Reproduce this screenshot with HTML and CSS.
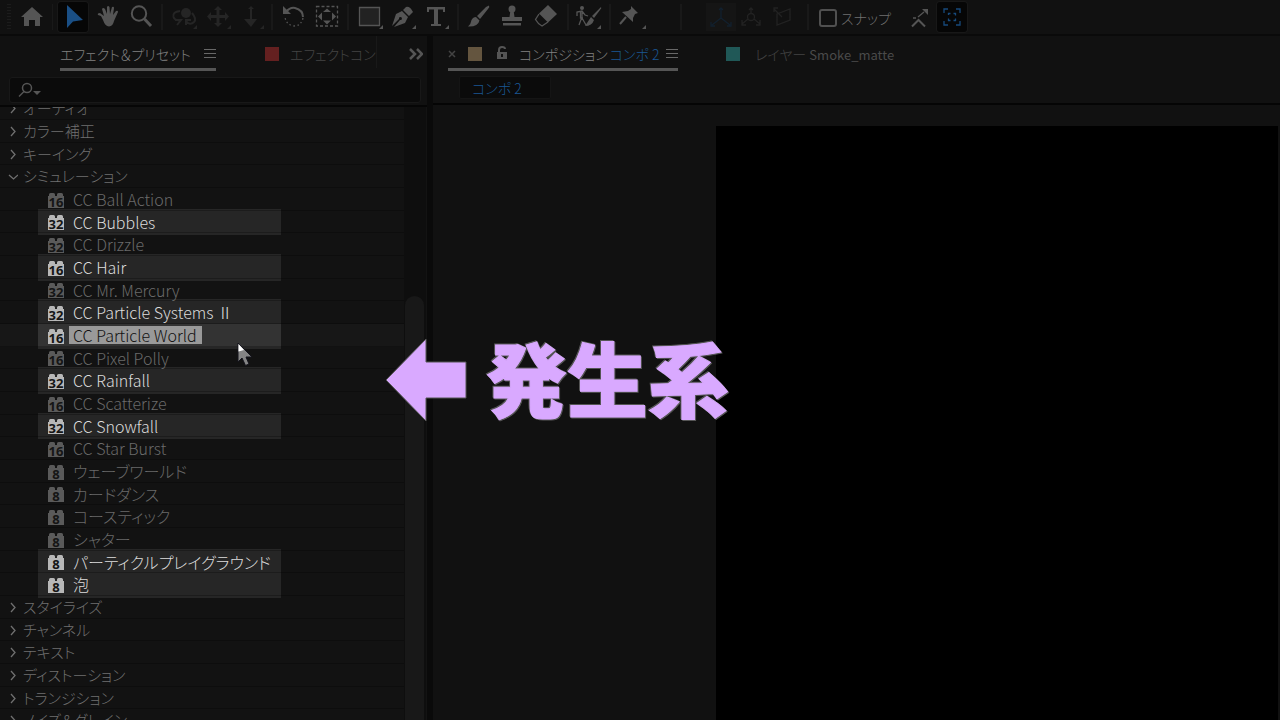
FILE: index.html
```html
<!DOCTYPE html>
<html lang="ja">
<head>
<meta charset="utf-8">
<title>エフェクト＆プリセット</title>
<link rel="stylesheet" href="styles.css">
</head>
<body>
<svg class="defs" aria-hidden="true">
  <symbol id="brick" viewBox="0 0 16 15"><path fill="currentColor" d="M0 15V3H1V1.500Q1 0 2.500 0H5.500Q7 0 7 1.500V3H9V1.500Q9 0 10.500 0H13.500Q15 0 15 1.500V3H16V15Z"/></symbol>
  <symbol id="closed" viewBox="0 0 10 12"><path d="M3 2L7 6.500L3 11" fill="none" stroke="currentColor" stroke-width="1.3"/></symbol>
  <symbol id="open" viewBox="0 0 10 12"><path d="M1 5L5.500 9L10 5" fill="none" stroke="currentColor" stroke-width="1.3"/></symbol>
  <symbol id="menu" viewBox="0 0 12 12"><path d="M0 1.5H12M0 5.5H12M0 9.5H12" stroke="currentColor"/></symbol>
</svg>

<header class="toolbar">
  <span class="grip"></span>
  <button class="tool home" aria-label="ホーム"><svg viewBox="15 0 34 34"><path d="M32 7L21 17H24V26H29V20H35V26H40V17H43Z"/></svg></button>
  <span class="sep"></span>
  <button class="tool active" aria-label="選択ツール"><svg viewBox="57 0 34 34"><path class="blue" d="M68 5V28L74 21.500L84 20Z"/></svg></button>
  <button class="tool" aria-label="手のひらツール"><svg viewBox="90 0 34 34"><path d="M103 20L101 16L98 15Q97 13 100 13L104 16L102 9Q103 7 105 9L107 14V7Q108 5 109.500 7L110 14L112 7Q114 6 114 8L113 15L116 11Q118 10 118 12L114 21Q113 26 109 26.500Q105 26 103 20Z"/></svg></button>
  <button class="tool" aria-label="ズームツール"><svg viewBox="124 0 34 34"><circle class="line" cx="139" cy="13.500" r="7.200"/><path class="line thick" d="M144.500 19L151 26"/></svg></button>
  <span class="sep"></span>
  <button class="tool faint" aria-label="周回ツール"><svg viewBox="166 0 34 34"><circle cx="186" cy="13" r="5"/><path class="line" d="M180 11Q172 12 173.500 17Q175 21 180 20M177 25L181 20L175 20M192 13Q197 19 194 22Q190 26 186 21M186 25V20H191"/><path d="M193 29H197V25Z"/></svg></button>
  <button class="tool faint" aria-label="パンツール"><svg viewBox="200 0 34 34"><path d="M218 6L222 10H219.500V15H225V12L229 16.500L225 21V18H219.500V23H222L218 27L214 23H216.500V18H211V21L207 16.500L211 12V15H216.500V10H214Z"/><path d="M227 29H231V25Z"/></svg></button>
  <button class="tool faint" aria-label="ドリーツール"><svg viewBox="234 0 34 34"><path d="M251 6L254 9H252V19H257L251 27L244 19H250V9H248Z"/><path d="M260 29H264V25Z"/></svg></button>
  <span class="sep"></span>
  <button class="tool" aria-label="回転ツール"><svg viewBox="276 0 34 34"><path class="line" d="M286 12Q290 7 295 8Q303 10 303 17"/><path d="M283 6V14H291Z"/><path class="line dots" d="M303 18Q301 26 294 26Q286 25 285 17"/></svg></button>
  <button class="tool" aria-label="アンカーポイントツール"><svg viewBox="310 0 34 34"><path class="line fine dash" d="M316.500 6.500H337.500V26H316.500Z"/><path d="M323 12L327 8.500L331 12ZM323 20.500H331L327 24.500ZM322 12.500V20.500L318 16.500ZM332 12.500V20.500L336 16.500Z"/></svg></button>
  <span class="sep"></span>
  <button class="tool" aria-label="長方形ツール"><svg viewBox="352 0 34 34"><path class="line fine shape" d="M359.500 7.500H379.500V25.500H359.500Z"/><path d="M379 29H383V25Z"/></svg></button>
  <button class="tool" aria-label="ペンツール"><svg viewBox="386 0 34 34"><path d="M392 26L396 14L402 11L408 17L405 23L394 27L400 20A1.500 1.500 0 1 0 399 19ZM403 10L406 7Q410 6 413 12L409 16Z"/><path d="M412 29H416V25Z"/></svg></button>
  <button class="tool" aria-label="文字ツール"><svg viewBox="420 0 34 34"><path d="M427 7H445V12H443V9.500H438V24H441V26H431V24H434V9.500H429V12H427Z"/><path d="M445 29H449V25Z"/></svg></button>
  <span class="sep"></span>
  <button class="tool" aria-label="ブラシツール"><svg viewBox="462 0 34 34"><path d="M489 5.500Q490 7 488 9L480 19L477 16L486 7ZM476 17L479.500 20.500Q478 27 468 26.500Q471 24 471.500 20Q473 17 476 17Z"/></svg></button>
  <button class="tool" aria-label="コピースタンプツール"><svg viewBox="496 0 34 34"><circle cx="512" cy="9" r="3.500"/><path d="M510.500 10H513.500L514.500 17H522V21H502V17H509.500ZM503 23H521V25.500H503Z"/></svg></button>
  <button class="tool" aria-label="消しゴムツール"><svg viewBox="530 0 34 34"><path d="M548 5L557 14L548 22.500L539 13.500Z"/><path class="line fine" d="M539 14L535.500 19.500Q538 24 542 26L548 22"/></svg></button>
  <span class="sep"></span>
  <button class="tool" aria-label="ロトブラシツール"><svg viewBox="572 0 34 34"><circle cx="582" cy="8" r="2"/><path class="line fine" d="M577 16V12L582 11L585 15L588 16M582 11V17L579 25M582 18L586 25M580.500 12V18H583"/><path d="M601 7Q602 8 600 10L594 18L592 16ZM591 17L594 20Q592 26 585 26L589 20Z"/><path d="M597 29H601V25Z"/></svg></button>
  <span class="sep"></span>
  <button class="tool" aria-label="パペットピンツール"><svg viewBox="614 0 34 34"><path d="M631 6L638 13L635 14L633 18V22L622 12L628 11L631 9Z"/><path class="line" d="M626 17L620 24"/><path d="M642 29H646V25Z"/></svg></button>
  <span class="space"></span>
  <span class="sep"></span>
  <div class="axes">
    <button class="tool axis chosen" aria-label="ローカル軸"><svg viewBox="704 0 34 34"><path class="line fine" d="M721 8V18L712 25M721 18L730 25M711 22V26H715M731 22V26H727M719 10L721 8L723 10"/></svg></button>
    <button class="tool axis" aria-label="ワールド軸"><svg viewBox="734 0 34 34"><circle class="line fine" cx="751" cy="17" r="3.500"/><path class="line fine" d="M751 8V14M748 19L742 24M754 19L760 24M742 20V25H746M760 20V25H756M749 10L751 8L753 10"/></svg></button>
    <button class="tool axis" aria-label="ビュー軸"><svg viewBox="764 0 34 34"><path class="line fine" d="M777 14L790 9V20L777 25ZM782 17L774 9M774 12V8H778"/></svg></button>
  </div>
  <span class="sep"></span>
  <label class="snap"><input type="checkbox">スナップ</label>
  <button class="tool" aria-label="エッジにスナップ"><svg viewBox="903 0 34 34"><path class="line" d="M912 26.500L918.500 20L925 26.500"/><path class="line fine" d="M913 18H916M918 17L924 12"/><path d="M922 9H928V15Z"/></svg></button>
  <button class="tool active last" aria-label="フレームにスナップ"><svg viewBox="935 0 34 34"><path class="line fine bluel" d="M944 13V9H948M956 9H960V13M960 21V25H956M948 25H944V21M948.500 15V13.500H950.500M953.500 13.500H955.500V15.500M955.500 18.500V20.500H953.500M950.500 20.500H948.500V18.500"/></svg></button>
</header>

<main class="work">
  <section class="panel effects">
    <div class="tabs">
      <button class="tab current">エフェクト＆プリセット<svg class="menu"><use href="#menu"/></svg></button>
      <button class="tab other"><i class="swatch red"></i>エフェクトコン</button>
      <button class="more" aria-label="その他"><svg viewBox="0 0 14 12"><path d="M1 1L6 6L1 11M8 1L13 6L8 11" fill="none" stroke="currentColor" stroke-width="2.500"/></svg></button>
    </div>
    <label class="search">
      <svg viewBox="0 0 24 16"><circle cx="9" cy="6" r="4.500"/><path d="M6 9.500L1 14.500"/><path class="solid" d="M15 9H23L19 13Z"/></svg>
      <input type="text" aria-label="検索">
    </label>
    <div class="browser">
      <ul class="tree">
        <li><button class="cat"><svg><use href="#closed"/></svg>オーディオ</button></li>
        <li><button class="cat"><svg><use href="#closed"/></svg>カラー補正</button></li>
        <li><button class="cat"><svg><use href="#closed"/></svg>キーイング</button></li>
        <li><button class="cat"><svg><use href="#open"/></svg>シミュレーション</button></li>
        <li class="fx"><span class="bit"><svg><use href="#brick"/></svg><b>16</b></span><span class="name">CC Ball Action</span></li>
        <li class="fx lit"><span class="bit"><svg><use href="#brick"/></svg><b>32</b></span><span class="name">CC Bubbles</span></li>
        <li class="fx"><span class="bit"><svg><use href="#brick"/></svg><b>32</b></span><span class="name">CC Drizzle</span></li>
        <li class="fx lit"><span class="bit"><svg><use href="#brick"/></svg><b>16</b></span><span class="name">CC Hair</span></li>
        <li class="fx"><span class="bit"><svg><use href="#brick"/></svg><b>32</b></span><span class="name">CC Mr. Mercury</span></li>
        <li class="fx lit"><span class="bit"><svg><use href="#brick"/></svg><b>32</b></span><span class="name">CC Particle Systems Ⅱ</span></li>
        <li class="fx lit picked"><span class="bit"><svg><use href="#brick"/></svg><b>16</b></span><span class="name">CC Particle World</span></li>
        <li class="fx"><span class="bit"><svg><use href="#brick"/></svg><b>16</b></span><span class="name">CC Pixel Polly</span></li>
        <li class="fx lit"><span class="bit"><svg><use href="#brick"/></svg><b>32</b></span><span class="name">CC Rainfall</span></li>
        <li class="fx"><span class="bit"><svg><use href="#brick"/></svg><b>16</b></span><span class="name">CC Scatterize</span></li>
        <li class="fx lit"><span class="bit"><svg><use href="#brick"/></svg><b>32</b></span><span class="name">CC Snowfall</span></li>
        <li class="fx"><span class="bit"><svg><use href="#brick"/></svg><b>16</b></span><span class="name">CC Star Burst</span></li>
        <li class="fx"><span class="bit"><svg><use href="#brick"/></svg><b>8</b></span><span class="name">ウェーブワールド</span></li>
        <li class="fx"><span class="bit"><svg><use href="#brick"/></svg><b>8</b></span><span class="name">カードダンス</span></li>
        <li class="fx"><span class="bit"><svg><use href="#brick"/></svg><b>8</b></span><span class="name">コースティック</span></li>
        <li class="fx"><span class="bit"><svg><use href="#brick"/></svg><b>8</b></span><span class="name">シャター</span></li>
        <li class="fx lit"><span class="bit"><svg><use href="#brick"/></svg><b>8</b></span><span class="name">パーティクルプレイグラウンド</span></li>
        <li class="fx lit"><span class="bit"><svg><use href="#brick"/></svg><b>8</b></span><span class="name">泡</span></li>
        <li><button class="cat"><svg><use href="#closed"/></svg>スタイライズ</button></li>
        <li><button class="cat"><svg><use href="#closed"/></svg>チャンネル</button></li>
        <li><button class="cat"><svg><use href="#closed"/></svg>テキスト</button></li>
        <li><button class="cat"><svg><use href="#closed"/></svg>ディストーション</button></li>
        <li><button class="cat"><svg><use href="#closed"/></svg>トランジション</button></li>
        <li><button class="cat"><svg><use href="#closed"/></svg>ノイズ＆グレイン</button></li>
      </ul>
      <div class="track"><div class="thumb"></div></div>
    </div>
  </section>

  <section class="panel comp">
    <div class="tabs">
      <button class="tab current"><svg class="close" viewBox="0 0 8 8"><path d="M1 1L7 7M7 1L1 7" stroke="currentColor" stroke-width="1.5"/></svg><i class="swatch tan"></i><svg class="lock" viewBox="0 0 12 14"><path d="M3 7V4Q3 1 6 1Q9 1 9 3" fill="none" stroke="currentColor" stroke-width="2"/><path fill="currentColor" fill-rule="evenodd" d="M1 6H11V13H1ZM5 8V11H7V8Z"/></svg><span class="title">コンポジション<em>コンポ 2</em></span><svg class="menu"><use href="#menu"/></svg></button>
      <button class="tab layer"><i class="swatch teal"></i><span>レイヤー <span class="latin">Smoke_matte</span></span></button>
    </div>
    <div class="crumbs"><button class="crumb">コンポ 2</button></div>
    <div class="viewer"><div class="canvas"></div></div>
  </section>
</main>

<svg class="cursor" viewBox="0 0 16 26"><path d="M1 1V20L5 16L8.500 23.500L12 22L9 15H15Z" fill="#858585" stroke="#14141c"/><path d="M1.500 2V9.500L7 8Z" fill="#fff"/></svg>
<div class="callout">
  <svg viewBox="0 0 82 86"><path d="M1 43L41 2V25H81V61H41V84Z"/></svg>
  <strong>発生系</strong>
</div>
</body>
</html>
```

FILE: styles.css
```css
* { box-sizing: border-box; }
body {
  margin: 0;
  height: 100vh;
  overflow: hidden;
  display: flex;
  flex-direction: column;
  position: relative;
  background: #0a0a0a;
  color: #707070;
  font: 300 15px/22px "Noto Sans CJK JP", sans-serif;
  font-feature-settings: "palt";
}
button {
  border: 0;
  padding: 0;
  background: none;
  color: inherit;
  font: inherit;
  font-feature-settings: inherit;
}
svg { display: block; flex: none; }
.defs { position: absolute; width: 0; height: 0; }

.toolbar {
  flex: none;
  display: flex;
  height: 34px;
  padding-left: 7px;
  background: #111;
}
.grip {
  width: 4px;
  margin: 4px 4px 4px 0;
  background: repeating-linear-gradient(#1c1c1c 0 1px, #111 1px 3px);
}
.tool { width: 34px; height: 34px; flex: none; }
.tool svg { width: 34px; height: 34px; fill: #555; stroke: none; }
.sep { flex: none; width: 8px; padding: 0 3px; margin: 4px 0; background: #191919 content-box; }
.home + .sep { width: 7px; }
.tool .line { fill: none; stroke: #555; stroke-width: 2; }
.tool .thick { stroke-width: 3; }
.tool .fine { stroke-width: 1.3; }
.tool .shape { fill: #222; }
.tool .dots { stroke-width: 1.3; stroke-dasharray: 1.5 2.5; }
.tool .dash { stroke-dasharray: 3 2; }
.tool .blue { fill: #1a4f85; }
.tool .bluel { stroke: #174a7c; }
.active { background: #060606; border-radius: 3px; width: 30px; height: 30px; margin: 2px; box-shadow: 0 0 0 1px #181818; }
.active svg { margin: -2px; }
.last { margin-left: 0; }
.tool.faint svg { fill: #252525; }
.tool.faint .line { stroke: #252525; }
.space { width: 29px; }
.axes { display: flex; margin-left: 21px; margin-right: 8px; }
.tool.axis { width: 30px; }
.axis svg { margin-left: -2px; }
.axis .line { stroke: #222; }
.chosen { background: #151515; margin: 3px 0; height: 28px; }
.chosen svg { margin-top: -3px; }
.chosen .line { stroke: #12202e; }
.snap { display: flex; align-items: center; gap: 4px; margin-left: 7px; width: 84px; padding-top: 2px; font-size: 14px; white-space: nowrap; }
.snap input { appearance: none; flex: none; width: 18px; height: 18px; margin: 0; border: 2px solid #505050; border-radius: 3px; }

.work { flex: 1; min-height: 0; display: flex; gap: 6px; padding-top: 2px; }
.panel { display: flex; flex-direction: column; background: #111; min-width: 0; }
.effects { flex: 0 0 427px; }
.comp { flex: 1; }
.tabs { display: flex; height: 35px; flex: none; font-size: 14px; }
.tab { display: flex; align-items: center; white-space: nowrap; padding-top: 4px; }
.current { border-bottom: 3px solid #555; color: #808080; }
.tab .menu { width: 12px; height: 12px; color: #686868; }
.effects .current { margin-left: 60px; width: 156px; justify-content: space-between; }
.swatch { width: 14px; height: 14px; flex: none; }
.red { background: #642020; }
.tan { background: #64553f; }
.teal { background: #205857; }
.other { margin-left: 49px; gap: 11px; width: 112px; height: 32px; overflow: hidden; border-right: 1px solid #191919; color: #444; }
.more { margin-left: 32px; color: #555; }
.more svg { width: 14px; height: 12px; }
.search {
  flex: none;
  display: flex;
  align-items: center;
  height: 26px;
  margin: 6px 6px 2px 9px;
  padding-left: 8px;
  background: #0b0b0b;
  border: 1px solid #181818;
  border-radius: 3px;
}
.search svg { width: 24px; height: 16px; fill: none; stroke: #555; stroke-width: 1.5; }
.search .solid { fill: #555; stroke: none; }
.search input { flex: 1; min-width: 0; border: 0; outline: 0; background: none; color: #777; font: inherit; }
.browser { flex: 1; min-height: 0; display: flex; overflow: hidden; border-top: 2px solid #060606; }
.tree { flex: 1; margin: -10px 0 0; padding: 0; list-style: none; isolation: isolate; background: #121212; }
.tree li {
  display: flex;
  align-items: center;
  height: 23px;
  padding-left: 8px;
  position: relative;
  border-bottom: 1px solid rgba(0, 0, 0, .25);
}
.tree li:nth-child(3n) { height: 22px; }
.cat { display: flex; align-items: center; gap: 5px; }
.cat svg { width: 10px; height: 12px; }
.tree .fx { padding-left: 48px; gap: 5px; color: #6a6a6a; }
.fx::before { content: ""; position: absolute; inset: -2px 123px -3px 38px; display: none; background: #262626; z-index: -1; }
.tree .lit { color: #ddd; }
.lit::before { display: block; }
.bit { position: relative; width: 16px; height: 15px; margin-top: 2px; flex: none; color: #5a5a5a; }
.bit svg { width: 16px; height: 15px; }
.bit b { position: absolute; inset: 3px 0 0; text-align: center; font: bold 13px/13px "Noto Sans", sans-serif; color: #151515; }
.lit .bit { color: #b8b8b8; }
.name { padding: 0 4px; font-size: 16px; line-height: 18px; white-space: pre; }
.tree .picked { background: linear-gradient(90deg, #171717 38px, #333 38px 281px, #171717 281px); }
.picked .name { background: #999; color: #111; padding-right: 5px; }
.track { width: 23px; background: #0e0e0e; padding: 189px 2px 0 1px; border-right: 1px solid #131313; }
.thumb { height: 100%; background: #181818; border-radius: 10px 10px 0 0; }

.comp .current { margin-left: 15px; width: 230px; }
.close { width: 8px; height: 8px; margin-right: 12px; color: #444; }
.lock { width: 12px; height: 14px; margin: 0 11px 3px 14px; color: #555; }
.title { flex: 1; display: flex; gap: 2px; }
em { font-style: normal; color: #1a5793; }
.layer { margin-left: 48px; padding-top: 1px; gap: 15px; color: #444; }
.latin { font-size: 13px; font-weight: 400; color: #4a4a4a; }
.crumbs { flex: none; height: 34px; padding: 5px 26px; border-bottom: 2px solid #050505; }
.crumb { width: 92px; height: 23px; padding-left: 12px; text-align: left; background: #0b0b0b; border: 1px solid #151515; color: #1a5793; border-radius: 2px; font-size: 14px; line-height: 20px; }
.viewer { flex: 1; display: flex; padding: 21px 2px 0 283px; }
.canvas { flex: 1; background: #000; }

.cursor { position: absolute; left: 237px; top: 342px; width: 16px; height: 26px; z-index: 5; }
.callout { position: absolute; left: 385px; top: 333px; display: flex; align-items: center; gap: 19px; z-index: 5; color: #d9a9ff; }
.callout svg { width: 82px; height: 86px; fill: #d9a9ff; stroke: #555; }
.callout strong {
  font-size: 81px;
  line-height: 86px;
  padding-bottom: 8px;
  font-weight: 900;
  font-feature-settings: normal;
  -webkit-text-stroke: 1px #d9a9ff;
  filter: drop-shadow(1px 1px 0 #555) drop-shadow(-1px -1px 0 #555);
}
```
